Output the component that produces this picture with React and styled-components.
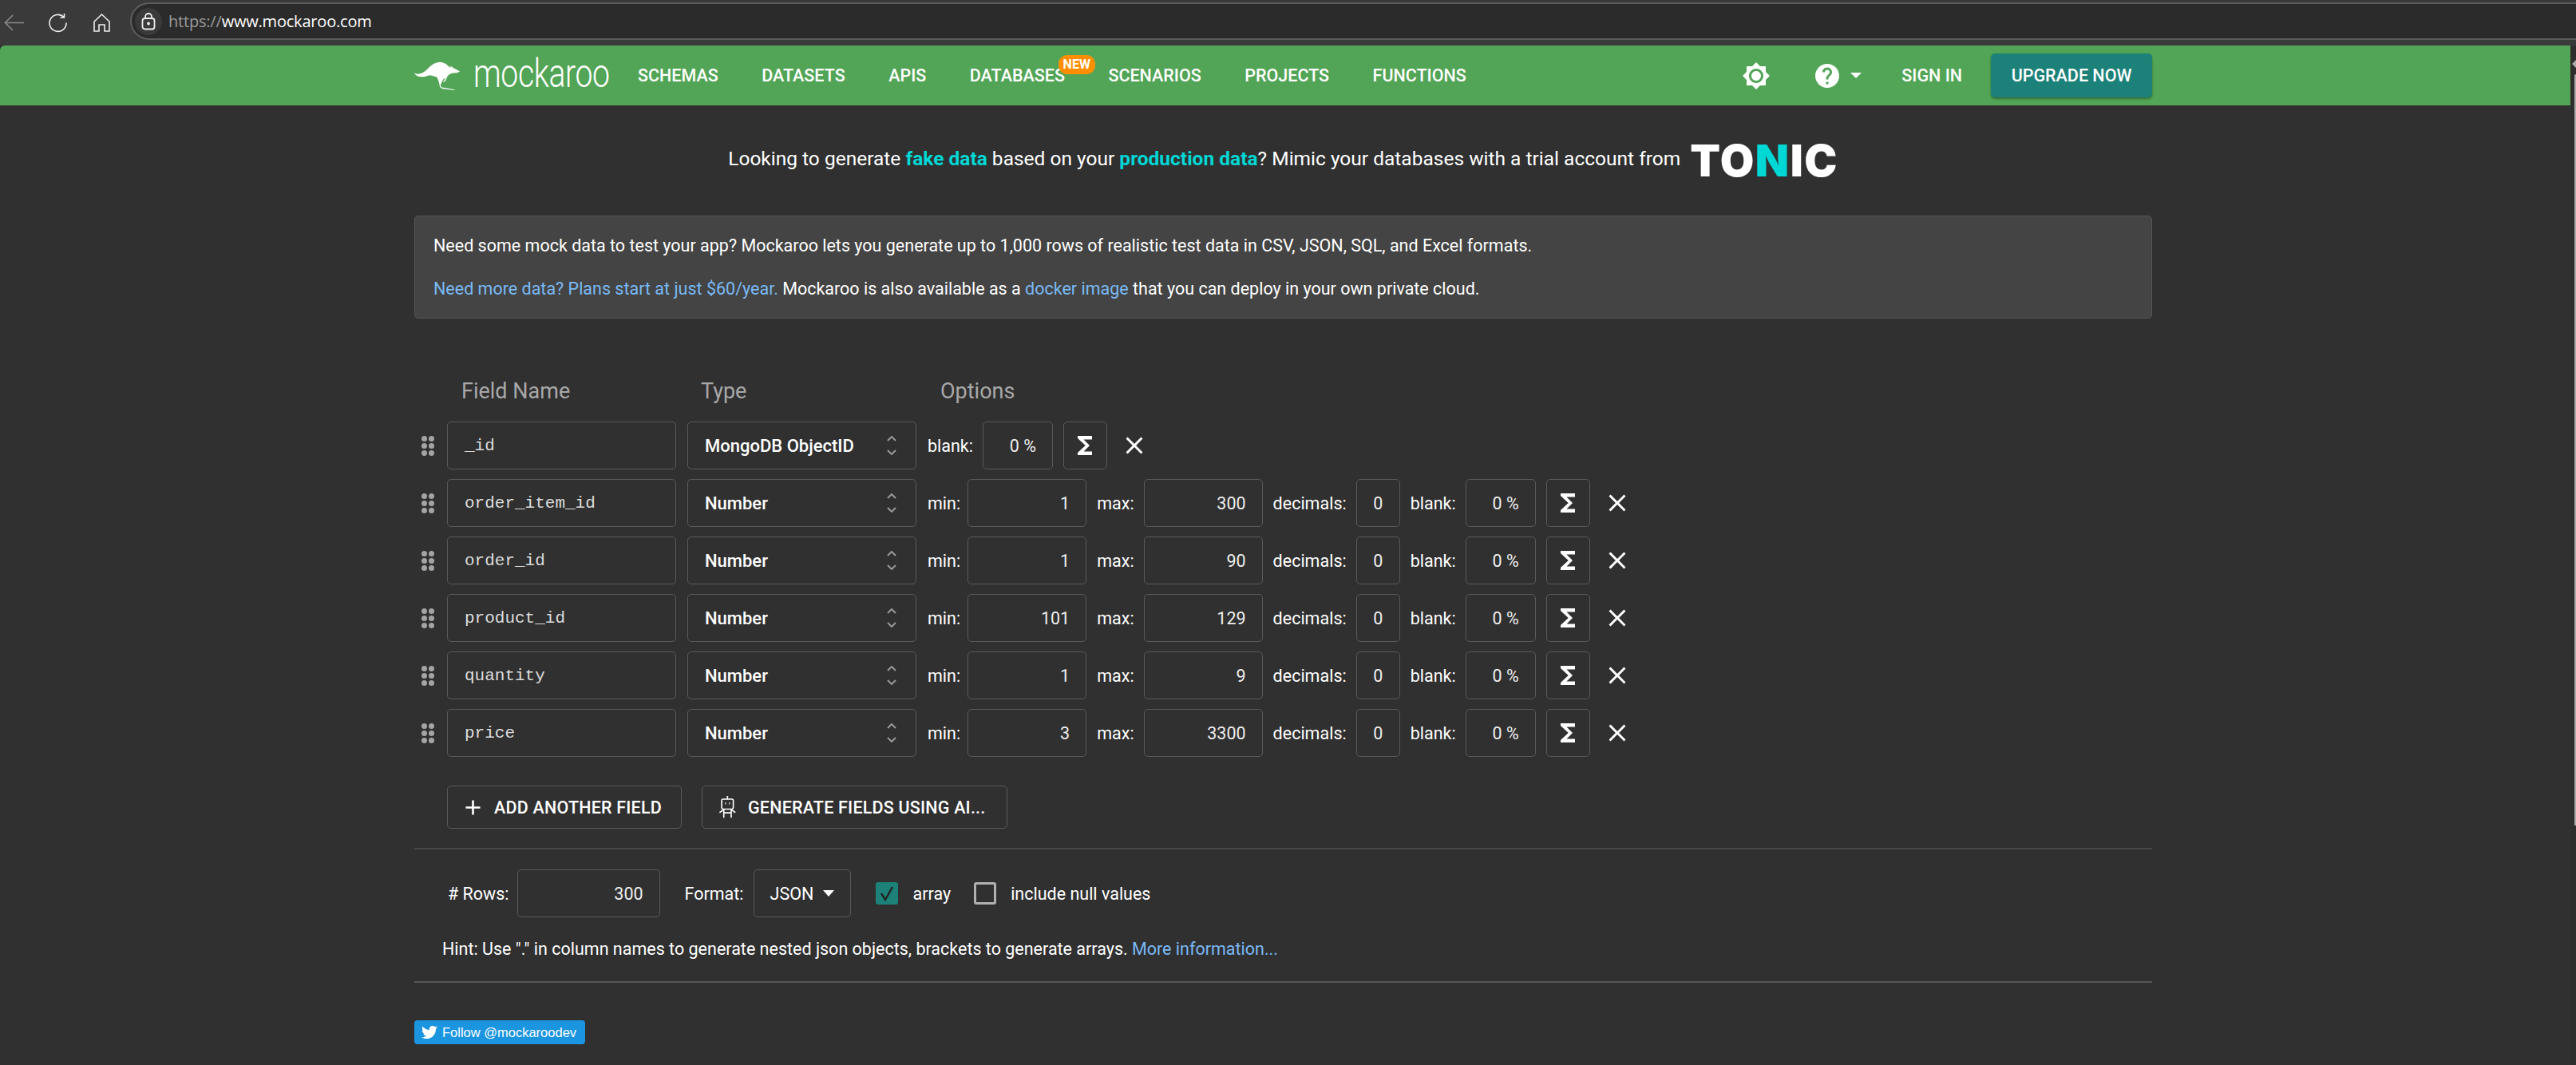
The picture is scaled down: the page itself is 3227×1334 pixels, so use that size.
import React from "react";
import styled, { createGlobalStyle } from "styled-components";
import { MdBrightness7, MdHelp, MdFunctions, MdClose, MdAdd } from "react-icons/md";
import { FaTwitter } from "react-icons/fa";

const Global = createGlobalStyle`
  html, body { margin: 0; height: 1334px; overflow: hidden; background: #303030; }
  body { font-family: Roboto, "Liberation Sans", sans-serif; color: #fff; font-size: 21.5px; }
  * { box-sizing: border-box; }
`;

const Shell = styled.div`position: relative; width: 3227px; height: 1334px; overflow: hidden;`;

const Chrome = styled.div`
  height: 57px; background: #3a3a3a; display: flex; align-items: flex-start; padding: 3px 0 0 5px;
`;
const ChromeIcon = styled.svg`
  width: 25px; height: 25px; margin-top: 13px; flex: none; margin-right: ${p => p.$gap}px;
  fill: none; stroke: ${p => p.$dim ? "#8a8a8a" : "#eee"}; stroke-width: 1.6;
`;
const Address = styled.div`
  flex: 1; height: 47px; background: #2b2b2b; border: 2px solid #5c5c5c; border-right: 0;
  border-radius: 24px 0 0 24px; display: flex; align-items: center; padding-left: 4px;
`;
const LockWrap = styled.div`
  width: 34px; height: 34px; border-radius: 50%; background: #3a3a3a; display: flex; align-items: center; justify-content: center;
`;
const Url = styled.div`
  margin-left: 8px; font-family: "Open Sans", sans-serif; font-size: 20px; color: #fff;
  letter-spacing: -0.2px;
`;
const UrlScheme = styled.span`color: #9a9a9a;`;

const Header = styled.header`
  height: 75px; margin-right: 7px; background: #52a556; border-top-left-radius: 6px;
  display: flex; align-items: center; padding: 0 524px 0 519px;
`;
const LogoMark = styled.svg`width: 58px; height: 38px; flex: none; fill: #fff;`;
const WordMark = styled.div`
  font-family: Roboto, sans-serif; font-weight: 300; font-size: 50px; line-height: 46px; color: #fff;
  width: 164px; margin-left: 16px; letter-spacing: -0.5px; transform: scaleX(.783); transform-origin: left center;
  white-space: nowrap; margin-top: -6px;
`;
const Nav = styled.nav`display: flex; gap: 54.5px; margin-left: 42px; flex: 1;`;
const NavLink = styled.a`
  position: relative; font-size: 21.5px; font-weight: 500; color: #fff; text-transform: uppercase; white-space: nowrap;
`;
const NewBadge = styled.span`
  position: absolute; left: 111px; top: -13px; width: 46px; height: 24px; border-radius: 11px;
  background: #ff8f00; color: #fff; font-size: 16px; font-weight: 700; line-height: 24px; text-align: center;
`;
const HeaderTools = styled.div`display: flex; align-items: center;`;
const Caret = styled.span`
  display: inline-block; width: 0; height: 0; border-left: ${p => p.$w / 2}px solid transparent;
  border-right: ${p => p.$w / 2}px solid transparent; border-top: ${p => p.$h}px solid #fff;
`;
const HelpWrap = styled.div`display: flex; align-items: center; margin-left: 53px; gap: 11px;`;
const SignIn = styled.a`font-size: 21.5px; font-weight: 500; color: #fff; margin-left: 50px; white-space: nowrap;`;
const Upgrade = styled.a`
  width: 202px; height: 55px; margin-left: 36px; background: #1c8178; border-radius: 5px;
  display: flex; align-items: center; justify-content: center; font-size: 21.5px; font-weight: 500; color: #fff;
  box-shadow: 0 2px 3px rgba(0,0,0,.35); white-space: nowrap;
`;

const Page = styled.main`padding: 0 531px 0 519px;`;

const Promo = styled.div`
  height: 138px; display: flex; align-items: center; justify-content: center; font-size: 24.5px;
`;
const PromoText = styled.span`margin-top: -6px;`;
const Cyan = styled.b`color: #00d8d6; font-weight: 700;`;
const Tonic = styled.div`
  margin-left: 12px; font-family: Inter, sans-serif; font-weight: 900; font-size: 55px; line-height: 42px;
  color: #fff; letter-spacing: 1.5px; display: flex;
`;
const TonicN = styled.span`color: #00d8d6;`;

const InfoBox = styled.section`
  height: 129px; background: #444; border: 1px solid #565656; border-radius: 5px; padding: 22px 23px;
`;
const InfoLine = styled.p`margin: 0 0 24px; font-size: 21.5px; line-height: 30px;`;
const Link = styled.a`color: #7abaf5;`;

const Fields = styled.section`margin-top: 71px; padding-left: 9px;`;
const Heads = styled.div`display: flex; height: 40px; margin-bottom: 18px; padding-left: 50px; align-items: center;`;
const Head = styled.div`width: 300px; color: #a8a8a8; font-size: 27px;`;

const Row = styled.div`display: flex; align-items: center; height: 60px; margin-bottom: 12px;`;
const Grip = styled.div`
  width: 16px; margin-right: 16px; display: grid; grid-template-columns: 7px 7px; gap: 2px 2px; flex: none;
`;
const Dot = styled.i`width: 7px; height: 7px; border-radius: 50%; background: #a4a4a4; display: block;`;
const Box = styled.div`
  height: 60px; width: ${p => p.$w}px; flex: none; border: 1px solid #5a5a5a; border-radius: 5px;
  display: flex; align-items: center; font-size: 21.5px; color: #eee;
`;
const NameBox = styled(Box)`
  font-family: "Liberation Mono", monospace; font-size: 21px; color: #ddd; padding-left: 21px; margin-right: 14px;
`;
const TypeBox = styled(Box)`
  font-size: 22px; font-weight: 500; color: #fff; padding: 0 23px 0 21px; justify-content: space-between; margin-right: 14px;
`;
const NumBox = styled(Box)`justify-content: flex-end; padding-right: 20px;`;
const CenterBox = styled(Box)`justify-content: center;`;
const Chev = styled.svg`width: 14px; height: 24px; fill: none; stroke: #999; stroke-width: 2;`;
const Opt = styled.div`display: flex; align-items: center; gap: ${p => p.$gap || 12}px; margin-right: 13px;`;
const Label = styled.span`font-size: 21.5px; color: #fff; white-space: nowrap;`;
const IconBtn = styled(CenterBox)`color: #fff;`;
const CloseBtn = styled.div`display: flex; margin-left: 16px; color: #fff;`;

const Actions = styled.div`display: flex; gap: 25px; margin: 36px 0 24px 41px;`;
const Btn = styled.button`
  height: 54px; width: ${p => p.$w}px; background: transparent; border: 1px solid #5a5a5a; border-radius: 5px; color: #fff;
  font-family: Roboto, sans-serif; font-size: 21.5px; font-weight: 500; letter-spacing: .2px; display: flex; align-items: center; padding: 0 0 0 ${p => p.$pad}px;
  gap: ${p => p.$gap}px; white-space: nowrap;
`;
const Rule = styled.hr`margin: 0; border: 0; height: 2px; background: ${p => p.$c};`;

const Options = styled.div`display: flex; align-items: center; height: 60px; margin: 25px 0 25px 42px; font-size: 21.5px;`;
const OptLabel = styled.span`margin-left: ${p => p.$ml || 0}px; margin-right: ${p => p.$mr || 0}px; white-space: nowrap;`;
const Format = styled(Box)`justify-content: flex-start; padding-left: 20px; gap: 12px; color: #fff;`;
const Check = styled.span`
  width: 28px; height: 28px; border-radius: 3px; flex: none; display: flex; align-items: center; justify-content: center;
  margin-left: ${p => p.$ml}px;
  background: ${p => p.$on ? "#1c8178" : "transparent"}; border: ${p => p.$on ? "0" : "3px solid #b0b0b0"};
`;
const Hint = styled.p`margin: 0 0 25px 35px; font-size: 21.5px; line-height: 30px; white-space: nowrap;`;

const Follow = styled.a`
  margin-top: 47px; width: 214px; height: 30px; border-radius: 4px; background: #1b95e0; color: #fff;
  display: flex; align-items: center; padding-left: 9px; gap: 6px; font-family: "Liberation Sans", sans-serif; font-size: 16.5px; white-space: nowrap;
`;

const Scroll = styled.div`position: absolute; right: 0; top: 57px; bottom: 0; width: 7px; background: #2e2e2e;`;
const ScrollArrow = styled.div`
  position: absolute; right: 0; top: 18px; width: 0; height: 0; border-top: 5px solid transparent; border-bottom: 5px solid transparent;
  border-right: 5px solid #aaa;
`;
const ScrollThumb = styled.div`position: absolute; right: 0; top: 36px; width: 2px; bottom: 300px; background: #aaa; border-radius: 2px 0 0 0;`;

const rows = [
  ["order_item_id", 1, 300],
  ["order_id", 1, 90],
  ["product_id", 101, 129],
  ["quantity", 1, 9],
  ["price", 3, 3300],
];

const GripDots = () => <Grip>{[0,1,2,3,4,5].map(i => <Dot key={i} />)}</Grip>;
const Chevrons = () => (
  <Chev viewBox="0 0 14 24"><path d="M2 6l5-5 5 5M2 18l5 5 5-5" /></Chev>
);
const RowTail = () => (
  <>
    <IconBtn $w={55}><MdFunctions size={36} /></IconBtn>
    <CloseBtn><MdClose size={36} /></CloseBtn>
  </>
);

export default function App() {
  return (
    <Shell>
      <Global />
      <Chrome>
        <ChromeIcon $dim $gap={30} viewBox="0 0 25 25"><path d="M25 12.5H2M11 3l-9.5 9.5L11 22" /></ChromeIcon>
        <ChromeIcon $gap={30} viewBox="0 0 25 25"><path d="M20 5.5A10.5 10.5 0 1 0 23 12.5M20.5 1v5h-5" /></ChromeIcon>
        <ChromeIcon $gap={23} viewBox="0 0 25 25"><path d="M12.5 2L3 11v12h6v-8h7v8h6V11z" /></ChromeIcon>
        <Address>
          <LockWrap>
            <svg width="18" height="22" viewBox="0 0 18 22" fill="none" stroke="#eee" strokeWidth="1.8">
              <rect x="1.5" y="7" width="15" height="13.5" rx="3" />
              <path d="M5 7V5a4 4 0 0 1 8 0v2" />
              <circle cx="9" cy="13.5" r="1" fill="#eee" />
            </svg>
          </LockWrap>
          <Url><UrlScheme>https://</UrlScheme>www.mockaroo.com</Url>
        </Address>
      </Chrome>
      <Header>
        <LogoMark viewBox="27 50 175 115">
          <path d="M27 97C40 104 58 100 73 85C88 68 104 56 124 55C140 55 153 66 165 79L163 70L180 80L200 91L188 96L172 97C160 100 152 106 149 117C147 125 143 130 135 132L146 116C135 118 131 130 126 144L129 151L181 160L178 162L132 156L124 150C122 138 118 122 112 112C100 108 92 106 84 105C66 112 38 118 27 97Z" />
        </LogoMark>
        <WordMark>mockaroo</WordMark>
        <Nav>
          <NavLink>Schemas</NavLink>
          <NavLink>Datasets</NavLink>
          <NavLink>APIs</NavLink>
          <NavLink>Databases<NewBadge>NEW</NewBadge></NavLink>
          <NavLink>Scenarios</NavLink>
          <NavLink>Projects</NavLink>
          <NavLink>Functions</NavLink>
        </Nav>
        <HeaderTools>
          <MdBrightness7 size={36} color="#fff" />
          <HelpWrap><MdHelp size={36} color="#fff" /><Caret $w={14} $h={7} /></HelpWrap>
          <SignIn>SIGN IN</SignIn>
          <Upgrade>UPGRADE NOW</Upgrade>
        </HeaderTools>
      </Header>
      <Page>
        <Promo>
          <PromoText>Looking to generate <Cyan>fake data</Cyan> based on your <Cyan>production data</Cyan>? Mimic your databases with a trial account from</PromoText>
          <Tonic>TO<TonicN>N</TonicN>IC</Tonic>
        </Promo>
        <InfoBox>
          <InfoLine>Need some mock data to test your app? Mockaroo lets you generate up to 1,000 rows of realistic test data in CSV, JSON, SQL, and Excel formats.</InfoLine>
          <InfoLine><Link>Need more data? Plans start at just $60/year.</Link> Mockaroo is also available as a <Link>docker image</Link> that you can deploy in your own private cloud.</InfoLine>
        </InfoBox>
        <Fields>
          <Heads><Head>Field Name</Head><Head>Type</Head><Head>Options</Head></Heads>
          <Row>
            <GripDots />
            <NameBox $w={287}>_id</NameBox>
            <TypeBox $w={287}>MongoDB ObjectID<Chevrons /></TypeBox>
            <Opt><Label>blank:</Label><NumBox $w={88}>0 %</NumBox></Opt>
            <RowTail />
          </Row>
          {rows.map(([name, min, max]) => (
            <Row key={name}>
              <GripDots />
              <NameBox $w={287}>{name}</NameBox>
              <TypeBox $w={287}>Number<Chevrons /></TypeBox>
              <Opt $gap={9}><Label>min:</Label><NumBox $w={149}>{min}</NumBox></Opt>
              <Opt><Label>max:</Label><NumBox $w={149}>{max}</NumBox></Opt>
              <Opt><Label>decimals:</Label><CenterBox $w={55}>0</CenterBox></Opt>
              <Opt><Label>blank:</Label><NumBox $w={88}>0 %</NumBox></Opt>
              <RowTail />
            </Row>
          ))}
        </Fields>
        <Actions>
          <Btn $w={294} $pad={16} $gap={11}><MdAdd size={31} />ADD ANOTHER FIELD</Btn>
          <Btn $w={383} $pad={20} $gap={15}>
            <svg width="22" height="29" viewBox="60 34 66 88" fill="none" stroke="#fff" strokeWidth="5">
              <path d="M94 34v12" />
              <rect x="72" y="46" width="44" height="38" rx="5" />
              <path d="M85 62h3M100 62h3" strokeWidth="7" />
              <path d="M80 84v33M108 84v33M80 98h28M80 86L64 97M108 86l16 11" />
            </svg>
            GENERATE FIELDS USING AI...
          </Btn>
        </Actions>
        <Rule $c="#484848" />
        <Options>
          <OptLabel $mr={10}># Rows:</OptLabel>
          <NumBox $w={179}>300</NumBox>
          <OptLabel $ml={31} $mr={12}>Format:</OptLabel>
          <Format $w={122}>JSON<Caret $w={15} $h={8} /></Format>
          <Check $on $ml={31}>
            <svg width="20" height="22" viewBox="0 0 20 22" fill="none" stroke="#222" strokeWidth="2.4"><path d="M3 11l5 8L17 3" /></svg>
          </Check>
          <OptLabel $ml={19}>array</OptLabel>
          <Check $ml={29} />
          <OptLabel $ml={18}>include null values</OptLabel>
        </Options>
        <Hint>Hint: Use "." in column names to generate nested json objects, brackets to generate arrays. <Link>More information...</Link></Hint>
        <Rule $c="#565656" />
        <Follow><FaTwitter size={20} />Follow @mockaroodev</Follow>
      </Page>
      <Scroll><ScrollArrow /><ScrollThumb /></Scroll>
    </Shell>
  );
}
